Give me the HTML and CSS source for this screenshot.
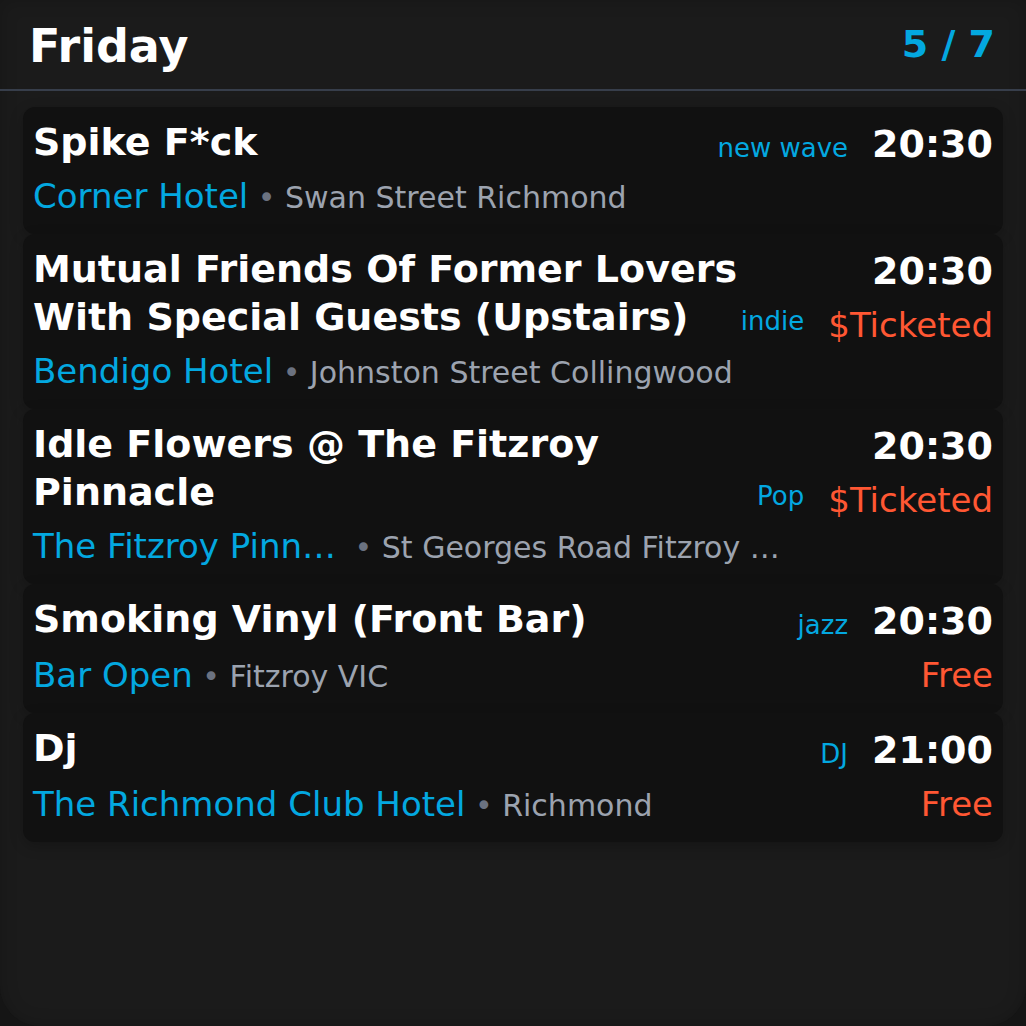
FILE: index.html
```html
<!DOCTYPE html>
<html lang="en">
<head>
<meta charset="utf-8">
<title>Friday</title>
<link rel="stylesheet" href="styles.css">
</head>
<body>
<div class="app">
  <header class="hdr">
    <span class="day">Friday</span>
    <span class="count">5 / 7</span>
  </header>
  <main class="list">
    <article class="card">
      <div class="main">
        <div class="title">Spike F*ck</div>
        <div class="where"><span class="venue">Corner Hotel</span><span class="addr"> <span class="dot">•</span> Swan Street Richmond</span></div>
      </div>
      <div class="meta">
        <div class="when"><span class="genre">new wave</span><span class="time">20:30</span></div>
      </div>
    </article>
    <article class="card">
      <div class="main">
        <div class="title">Mutual Friends Of Former Lovers With Special Guests (Upstairs)</div>
        <div class="where"><span class="venue">Bendigo Hotel</span><span class="addr"> <span class="dot">•</span> Johnston Street Collingwood</span></div>
      </div>
      <div class="meta">
        <div class="when"><span class="time">20:30</span></div>
        <div class="cost"><span class="genre">indie</span><span class="price">$Ticketed</span></div>
      </div>
    </article>
    <article class="card">
      <div class="main">
        <div class="title">Idle Flowers @ The Fitzroy Pinnacle</div>
        <div class="where"><span class="venue venue-cut">The Fitzroy Pinn…</span><span class="addr"> <span class="dot">•</span> St Georges Road Fitzroy …</span></div>
      </div>
      <div class="meta">
        <div class="when"><span class="time">20:30</span></div>
        <div class="cost"><span class="genre">Pop</span><span class="price">$Ticketed</span></div>
      </div>
    </article>
    <article class="card">
      <div class="main">
        <div class="title">Smoking Vinyl (Front Bar)</div>
        <div class="where"><span class="venue">Bar Open</span><span class="addr"> <span class="dot">•</span> Fitzroy VIC</span></div>
      </div>
      <div class="meta">
        <div class="when"><span class="genre">jazz</span><span class="time">20:30</span></div>
        <div class="cost"><span class="price">Free</span></div>
      </div>
    </article>
    <article class="card">
      <div class="main">
        <div class="title">Dj</div>
        <div class="where"><span class="venue">The Richmond Club Hotel</span><span class="addr"> <span class="dot">•</span> Richmond</span></div>
      </div>
      <div class="meta">
        <div class="when"><span class="genre">DJ</span><span class="time">21:00</span></div>
        <div class="cost"><span class="price">Free</span></div>
      </div>
    </article>
  </main>
</div>
</body>
</html>
```

FILE: styles.css
```css
html, body {
  margin: 0;
  padding: 0;
}
body {
  background: #151515;
  font-family: "DejaVu Sans", "Noto Sans", sans-serif;
}
.app {
  height: 1026px;
  background: #1b1b1b;
  border-radius: 0 0 40px 40px;
  box-shadow: inset 0 0 18px rgba(0, 0, 0, 0.18);
  overflow: hidden;
}
.hdr {
  display: flex;
  justify-content: space-between;
  align-items: flex-start;
  height: 69px;
  padding: 20px 31px 0 29px;
  border-bottom: 2px solid #373e4b;
}
.day {
  font-size: 46px;
  font-weight: 700;
  line-height: 53px;
  color: #ffffff;
}
.count {
  font-size: 38px;
  font-weight: 700;
  line-height: 44px;
  margin-top: 2px;
  color: #03a8e0;
}
.list {
  display: flex;
  flex-direction: column;
  padding: 16px 23px 0;
}
.card {
  display: flex;
  background: #111111;
  border-radius: 12px;
  padding: 11px 10px 14px;
  box-shadow: 0 4px 14px rgba(0, 0, 0, 0.22);
}
.main {
  flex: 1 1 0;
  min-width: 0;
  display: flex;
  flex-direction: column;
  justify-content: space-between;
  gap: 5px;
}
.title {
  font-size: 38px;
  font-weight: 700;
  line-height: 48.5px;
  color: #ffffff;
}
.where {
  white-space: nowrap;
  font-size: 34px;
  line-height: 48px;
}
.venue {
  font-size: 34px;
  color: #03a8e0;
}
.venue-cut {
  margin-right: 9px;
}
.addr {
  font-size: 30px;
  line-height: 44px;
  color: #9ca3af;
}
.dot {
  color: #6b7280;
}
.meta {
  flex: none;
  display: flex;
  flex-direction: column;
  align-items: flex-end;
  gap: 4px;
}
.when {
  display: flex;
  align-items: baseline;
  gap: 24px;
  height: 52px;
}
.time {
  font-size: 38px;
  font-weight: 700;
  line-height: 52px;
  color: #ffffff;
}
.genre {
  font-size: 26px;
  color: #03a8e0;
}
.cost {
  display: flex;
  align-items: flex-start;
  gap: 24px;
}
.cost .genre {
  line-height: 41px;
}
.price {
  font-size: 34px;
  line-height: 48px;
  color: #ff5733;
}
```
